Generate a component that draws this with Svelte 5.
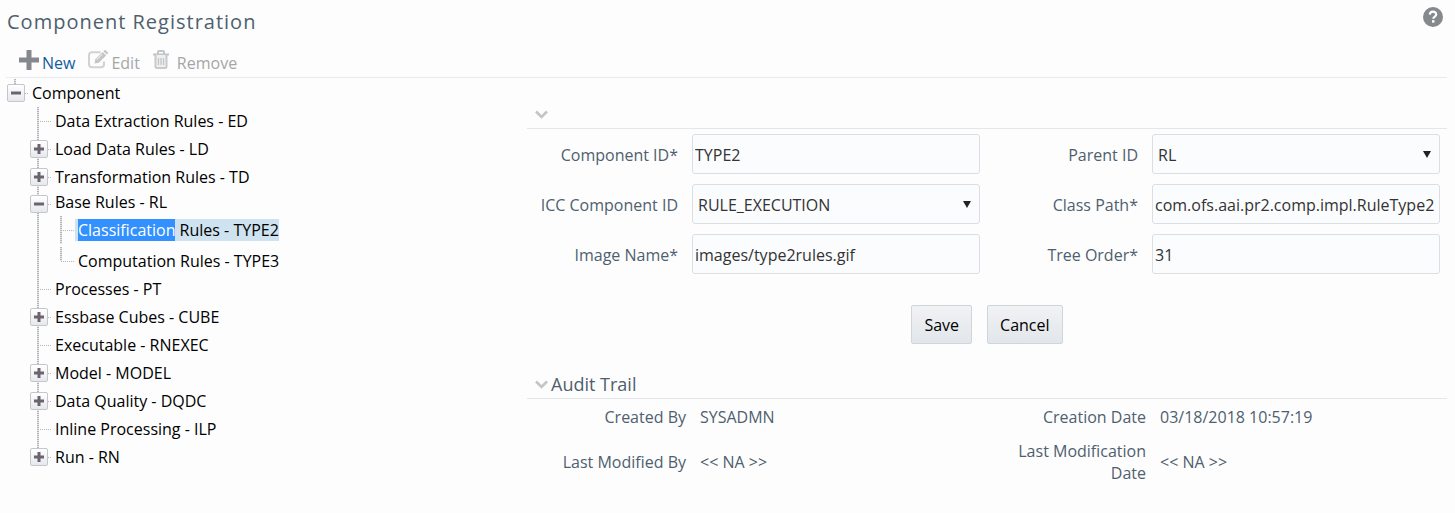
<script>
  let nodes = [
    { id: 'ED', name: 'Data Extraction Rules' },
    { id: 'LD', name: 'Load Data Rules', expandable: true },
    { id: 'TD', name: 'Transformation Rules', expandable: true },
    {
      id: 'RL',
      name: 'Base Rules',
      expandable: true,
      open: true,
      children: [
        { id: 'TYPE2', name: 'Classification Rules' },
        { id: 'TYPE3', name: 'Computation Rules' }
      ]
    },
    { id: 'PT', name: 'Processes' },
    { id: 'CUBE', name: 'Essbase Cubes', expandable: true },
    { id: 'RNEXEC', name: 'Executable' },
    { id: 'MODEL', name: 'Model', expandable: true },
    { id: 'DQDC', name: 'Data Quality', expandable: true },
    { id: 'ILP', name: 'Inline Processing' },
    { id: 'RN', name: 'Run', expandable: true }
  ];

  let rootOpen = true;
  let selected = 'TYPE2';

  let form = {
    componentId: 'TYPE2',
    parentId: 'RL',
    iccComponentId: 'RULE_EXECUTION',
    classPath: 'com.ofs.aai.pr2.comp.impl.RuleType2',
    imageName: 'images/type2rules.gif',
    treeOrder: '31'
  };

  let audit = [
    { label: 'Created By', value: 'SYSADMN' },
    { label: 'Creation Date', value: '03/18/2018 10:57:19' },
    { label: 'Last Modified By', value: '<< NA >>' },
    { label: 'Last Modification Date', value: '<< NA >>' }
  ];

  function toggle(node) {
    node.open = !node.open;
    nodes = nodes;
  }

  // first word is highlighted on the selected node
  function splitName(name) {
    const i = name.indexOf(' ');
    return [name.slice(0, i), name.slice(i)];
  }
</script>

<div class="page">
  <header>
    <h1>Component Registration</h1>
    <button class="help" aria-label="Help">
      <svg width="20" height="20" viewBox="0 0 20 20">
        <circle cx="10" cy="10" r="10" fill="#85898e" />
        <path d="M6.8 7.6C6.9 5.6 8.2 4.7 10 4.7s3.2 1 3.2 2.7c0 2.2-2.9 2.3-2.9 4.4" fill="none" stroke="#fff" stroke-width="2.2" />
        <rect x="9" y="13.2" width="2.5" height="2.4" fill="#fff" />
      </svg>
    </button>
  </header>

  <div class="toolbar">
    <button class="tool new">
      <svg width="20" height="20" viewBox="0 0 20 20"><path d="M7.500 0h5v7.500H20v5h-7.500V20h-5v-7.500H0v-5h7.500z" fill="#85898e" /></svg>
      <span>New</span>
    </button>
    <button class="tool edit" disabled>
      <svg width="20" height="20" viewBox="0 0 20 20">
        <path d="M12.500 2.200H4A3 3 0 0 0 1 5.200v9A3 3 0 0 0 4 17.200h9a3 3 0 0 0 3-3V11.500" fill="none" stroke="#d0d2d4" stroke-width="2" />
        <path d="M6.500 13.500l.8-4.300 7.300-7.300 3.500 3.500-7.300 7.300z" fill="#c3c5c7" />
        <path d="M15.300 1.200l1-.9q.7-.5 1.400 0l2 2q.5.700 0 1.400l-.9.900z" fill="#c3c5c7" />
        <path d="M8.700 9.700l5.500-5.500" stroke="#fdfdfd" />
      </svg>
      <span>Edit</span>
    </button>
    <button class="tool remove" disabled>
      <svg width="16" height="20" viewBox="0 0 16 20">
        <path d="M5 3.500V2q0-1 1-1h4q1 0 1 1v1.500M0 4.500h16" fill="none" stroke="#c3c5c7" stroke-width="2" />
        <path d="M2.500 5v11.500q0 1.500 1.500 1.500h8q1.500 0 1.500-1.500V5" fill="#eeeff0" stroke="#c8cacc" stroke-width="2" />
        <path d="M5.500 8v7M8 8v7M10.500 8v7" stroke="#c3c5c7" stroke-width="1.300" />
      </svg>
      <span>Remove</span>
    </button>
  </div>

  <div class="content">
    <nav class="tree" aria-label="Components">
      <div class="node root">
        <span class="gutter">
          <button class="expander" aria-label="Toggle Component" on:click={() => (rootOpen = !rootOpen)}>
            <svg width="10" height="10" viewBox="0 0 10 10">
              <path d={rootOpen ? 'M0 5h10' : 'M0 5h10M5 0v10'} stroke="#6b6370" stroke-width="3" />
            </svg>
          </button>
        </span>
        <a href="#component">Component</a>
      </div>
      {#if rootOpen}
        <ul>
          {#each nodes as node}
            <li class="node" class:open={node.open}>
              <span class="gutter">
                {#if node.expandable}
                  <button class="expander" aria-label="Toggle {node.name}" on:click={() => toggle(node)}>
                    <svg width="10" height="10" viewBox="0 0 10 10">
                      <path d={node.open ? 'M0 5h10' : 'M0 5h10M5 0v10'} stroke="#6b6370" stroke-width="3" />
                    </svg>
                  </button>
                {/if}
              </span>
              <div class="branch">
                <a href="#{node.id}">{node.name} - {node.id}</a>
                {#if node.open && node.children}
                  <ul>
                    {#each node.children as child}
                      <li class="node">
                        <span class="gutter"></span>
                        <a href="#{child.id}" class:selected={selected === child.id} on:click={() => (selected = child.id)}>
                          {#if selected === child.id}
                            <mark>{splitName(child.name)[0]}</mark>{splitName(child.name)[1]} - {child.id}
                          {:else}
                            {child.name} - {child.id}
                          {/if}
                        </a>
                      </li>
                    {/each}
                  </ul>
                {/if}
              </div>
            </li>
          {/each}
        </ul>
      {/if}
    </nav>

    <main>
      <div class="section-head">
        <svg width="13" height="9" viewBox="0 0 13 9"><path d="M1 1.500l5.500 5.500L12 1.500" fill="none" stroke="#c3c5c7" stroke-width="2.600" /></svg>
      </div>

      <form on:submit|preventDefault>
        <div class="fields">
          <div class="field">
            <label for="component-id">Component ID*</label>
            <input id="component-id" bind:value={form.componentId} />
          </div>
          <div class="field">
            <label for="parent-id">Parent ID</label>
            <div class="select">
              <select id="parent-id" bind:value={form.parentId}>
                <option>RL</option>
              </select>
            </div>
          </div>
          <div class="field">
            <label for="icc-id">ICC Component ID</label>
            <div class="select">
              <select id="icc-id" bind:value={form.iccComponentId}>
                <option>RULE_EXECUTION</option>
              </select>
            </div>
          </div>
          <div class="field">
            <label for="class-path">Class Path*</label>
            <input id="class-path" bind:value={form.classPath} />
          </div>
          <div class="field">
            <label for="image-name">Image Name*</label>
            <input id="image-name" bind:value={form.imageName} />
          </div>
          <div class="field">
            <label for="tree-order">Tree Order*</label>
            <input id="tree-order" bind:value={form.treeOrder} />
          </div>
        </div>
        <div class="actions">
          <button type="submit">Save</button>
          <button type="button">Cancel</button>
        </div>
      </form>

      <div class="section-head">
        <svg width="13" height="9" viewBox="0 0 13 9"><path d="M1 1.500l5.500 5.500L12 1.500" fill="none" stroke="#c3c5c7" stroke-width="2.600" /></svg>
        <h2>Audit Trail</h2>
      </div>
      <dl class="audit">
        {#each audit as item}
          <div>
            <dt>{item.label}</dt>
            <dd>{item.value}</dd>
          </div>
        {/each}
      </dl>
    </main>
  </div>
</div>

<style>
:global(body) {
  background: #fdfdfd;
}

.page {
  padding: 0 8px 0 6px;
  font-family: "Open Sans", "Noto Sans", sans-serif;
  font-size: 16px;
  line-height: 22px;
  color: #4f5f6f;
}

button, input, select {
  font: inherit;
  color: inherit;
}
button {
  cursor: pointer;
}

header {
  display: flex;
  justify-content: space-between;
  align-items: flex-start;
  height: 47px;
  padding: 7px 4px 0 1px;
  box-sizing: border-box;
}
h1 {
  margin: 0;
  font-size: 20px;
  line-height: 30px;
  font-weight: 400;
  letter-spacing: 1px;
}
.help {
  display: flex;
  padding: 0;
  border: 0;
  background: none;
}

/* Toolbar */
.toolbar {
  display: flex;
  gap: 13px;
  height: 31px;
  padding-left: 13px;
  box-sizing: border-box;
  border-bottom: 1px solid #e8eaec;
}
.tool {
  display: flex;
  align-items: flex-start;
  gap: 3px;
  padding: 3px 0 0;
  border: 0;
  background: none;
  color: #a5a6a6;
}
.tool svg {
  flex: none;
}
.tool span {
  padding-top: 2px;
}
.tool.new {
  color: #145c9e;
}
.tool.remove {
  gap: 8px;
}
.tool:disabled {
  cursor: default;
}

.content {
  display: grid;
  grid-template-columns: 521px 1fr;
}

/* Tree */
.tree {
  padding-top: 1px;
  color: #000;
}
.tree ul {
  list-style: none;
  margin: 0;
  padding: 0;
}
.tree > ul {
  padding-left: 24px;
}
.tree a {
  padding-left: 3px;
  color: inherit;
  text-decoration: none;
  white-space: nowrap;
}
.node {
  display: flex;
  align-items: center;
  min-height: 28px;
}
.root {
  padding-left: 1px;
}
.gutter {
  display: flex;
  align-items: center;
  align-self: stretch;
  width: 22px;
  background:
    repeating-linear-gradient(#b4b6bc 0 1px, #e4e5e8 1px 2px) 7px 0 / 2px 100% no-repeat,
    repeating-linear-gradient(90deg, #b4b6bc 0 1px, transparent 1px 2px) 8px 50% / 13px 1px no-repeat;
}
.root > .gutter,
.node:last-child > .gutter {
  background-size: 2px 50%, 13px 1px;
}
.expander {
  display: flex;
  align-items: center;
  justify-content: center;
  width: 18px;
  height: 18px;
  padding: 0;
  border: 1px solid #c4c7cc;
  border-radius: 2px;
  background: linear-gradient(#fff, #e6e8eb);
}
.node.open {
  align-items: flex-start;
}
.open > .gutter {
  align-items: flex-start;
  padding-top: 4px;
  box-sizing: border-box;
  background-position: 7px 0, 8px 13px;
}
.open .branch,
.open .branch ul {
  display: flex;
  flex-direction: column;
  gap: 3px;
}
.open .branch ul {
  padding-left: 1px;
}
.selected {
  background: #cfe2f0;
}
mark {
  background: #3390ff;
  color: #fff;
}

/* Details */
main {
  padding-top: 22px;
}
.section-head {
  display: flex;
  align-items: center;
  gap: 3px;
  height: 29px;
  box-sizing: border-box;
  padding-left: 8px;
  border-bottom: 1px solid #e4e7ea;
}
h2 {
  margin: 0;
  font-size: 18px;
  font-weight: 400;
}
.fields {
  display: grid;
  grid-template-columns: 1fr 1fr;
  row-gap: 10px;
  padding-top: 5px;
}
.field {
  display: grid;
  grid-template-columns: 151px 1fr;
  align-items: center;
  column-gap: 14px;
  padding-right: 7px;
}
label {
  padding-top: 2px;
  text-align: right;
}
input, select {
  width: 100%;
  height: 40px;
  box-sizing: border-box;
  padding: 2px 2px 0;
  border: 1px solid #dbdfe3;
  border-radius: 3px;
  background: #fbfcfe;
  color: #333;
}
select {
  appearance: none;
  padding: 2px 5px 0;
}
.select {
  display: grid;
  align-items: center;
}
.select select,
.select::after {
  grid-area: 1 / 1;
}
.select::after {
  content: "";
  justify-self: end;
  margin-right: 9px;
  border: 4px solid transparent;
  border-top: 7px solid #222;
  border-bottom: 0;
  pointer-events: none;
}
.actions {
  display: flex;
  justify-content: center;
  gap: 15px;
  padding: 31px 0 26px;
}
.actions button {
  height: 39px;
  padding: 0 12px;
  border: 1px solid #ced6dc;
  border-radius: 2px;
  background: linear-gradient(#f1f2f4, #e2e6ea);
  color: #000;
}

.audit {
  display: grid;
  grid-template-columns: 1fr 1fr;
  row-gap: 12px;
  margin: 0;
  padding-top: 7px;
}
.audit div {
  display: grid;
  grid-template-columns: 151px 1fr;
  align-items: center;
  column-gap: 14px;
  padding-left: 8px;
}
dt {
  text-align: right;
}
dd {
  margin: 0;
}
</style>
